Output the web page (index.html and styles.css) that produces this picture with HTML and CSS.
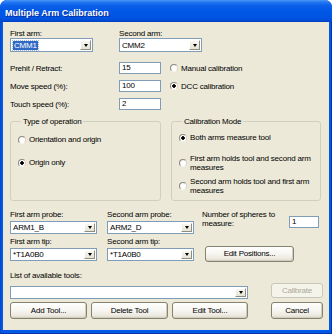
FILE: index.html
```html
<!DOCTYPE html>
<html>
<head>
<meta charset="utf-8">
<link rel="stylesheet" href="styles.css">
</head>
<body>
<div class="window">
  <div class="titlebar"><span class="title">Multiple Arm Calibration</span></div>
  <div class="frame">
    <div class="dialog">
      <div class="arms">
        <div class="field first">
          <span class="lbl">First arm:</span>
          <div class="combo w83"><span class="val"><span class="sel">CMM1</span></span><span class="drop"></span></div>
        </div>
        <div class="field">
          <span class="lbl">Second arm:</span>
          <div class="combo w83"><span class="val">CMM2</span><span class="drop"></span></div>
        </div>
      </div>

      <div class="settings">
        <span class="lbl">Prehit / Retract:</span>
        <div class="input">15</div>
        <div class="radio-cell"><span class="radio"><span class="dot"></span><span>Manual calibration</span></span></div>
        <span class="lbl">Move speed (%):</span>
        <div class="input">100</div>
        <div class="radio-cell"><span class="radio"><span class="dot on"></span><span>DCC calibration</span></span></div>
        <span class="lbl">Touch speed (%):</span>
        <div class="input">2</div>
        <div></div>
      </div>

      <div class="groups">
        <fieldset class="grp left">
          <legend>Type of operation</legend>
          <span class="radio"><span class="dot"></span><span>Orientation and origin</span></span>
          <span class="radio"><span class="dot on"></span><span>Origin only</span></span>
        </fieldset>
        <fieldset class="grp right">
          <legend>Calibration Mode</legend>
          <span class="radio r1"><span class="dot on"></span><span>Both arms measure tool</span></span>
          <span class="radio r2"><span class="dot"></span><span>First arm holds tool and second arm<br>measures</span></span>
          <span class="radio r3"><span class="dot"></span><span>Second arm holds tool and first arm<br>measures</span></span>
        </fieldset>
      </div>

      <div class="probes">
        <div class="cell">
          <span class="lbl">First arm probe:</span>
          <div class="combo w87"><span class="val">ARM1_B</span><span class="drop"></span></div>
        </div>
        <div class="cell">
          <span class="lbl">Second arm probe:</span>
          <div class="combo w87"><span class="val">ARM2_D</span><span class="drop"></span></div>
        </div>
        <div class="spheres">
          <span class="sph-text">Number of spheres to<br>measure:</span>
          <div class="input sph">1</div>
        </div>
        <div class="cell">
          <span class="lbl">First arm tip:</span>
          <div class="combo w87"><span class="val">*T1A0B0</span><span class="drop"></span></div>
        </div>
        <div class="cell">
          <span class="lbl">Second arm tip:</span>
          <div class="combo w87"><span class="val">*T1A0B0</span><span class="drop"></span></div>
        </div>
        <div class="cell">
          <div class="btn editpos">Edit Positions...</div>
        </div>
      </div>

      <div class="tools">
        <div class="cell">
          <span class="lbl">List of available tools:</span>
          <div class="combo tools-combo"><span class="val"></span><span class="drop"></span></div>
        </div>
        <div></div>
        <div class="btn calib disabled">Calibrate</div>
        <div class="btnrow">
          <div class="btn wide">Add Tool...</div>
          <div class="btn wide">Delete Tool</div>
          <div class="btn wide2">Edit Tool...</div>
        </div>
        <div></div>
        <div class="btn cancel">Cancel</div>
      </div>
    </div>
  </div>
</div>
</body>
</html>
```

FILE: styles.css
```css
* { box-sizing: border-box; }
html, body { margin: 0; padding: 0; }
body {
  width: 332px;
  height: 334px;
  overflow: hidden;
  background: #ffffff;
  font-family: "Liberation Sans", Arial, sans-serif;
  font-size: 8px;
  letter-spacing: -0.2px;
  color: #000;
}

.window {
  width: 332px;
  height: 334px;
  display: flex;
  flex-direction: column;
  border-radius: 7px 7px 0 0;
  overflow: hidden;
  background: #0055e5;
}

.titlebar {
  height: 22px;
  flex: none;
  display: flex;
  align-items: center;
  padding: 4px 0 0 5px;
  background: linear-gradient(#4a97f7 0%, #2377f2 10%, #0c60e8 25%, #0058e6 50%, #0054e3 80%, #004cd6 92%, #003fc0 100%);
}
.title {
  color: #fff;
  font-weight: bold;
  font-size: 9px;
  letter-spacing: 0;
  text-shadow: 1px 1px 0 #0a2a9a;
}

.frame {
  flex: 1;
  padding: 0 3px 4px 3px;
  background: linear-gradient(90deg, #0842c8 0, #0058e6 1px, #0058e6 331px);
  box-shadow: inset -1px 0 0 #0733a8, inset 0 -1px 0 #0733a8, inset 1px 0 0 #0a46c8;
}

.dialog {
  height: 100%;
  background: #ece9d8;
  padding: 7px 6px 0 7px;
}

.lbl {
  display: block;
  height: 9px;
  line-height: 9px;
  white-space: nowrap;
}

/* combos */
.combo {
  display: flex;
  align-items: stretch;
  height: 13px;
  background: #fff;
  border: 1px solid #7f9db9;
}
.combo .val {
  flex: 1;
  display: flex;
  align-items: center;
  padding-left: 2px;
  line-height: 9px;
  white-space: nowrap;
  overflow: hidden;
}
.combo .drop {
  flex: none;
  width: 11px;
  margin: 1px;
  display: flex;
  align-items: center;
  justify-content: center;
  background: linear-gradient(#f7f6f1, #e6e3d6);
  border: 1px solid;
  border-color: #ffffff #8f8d80 #8f8d80 #ffffff;
}
.combo .drop::after {
  content: "";
  width: 0;
  height: 0;
  border-left: 2.5px solid transparent;
  border-right: 2.5px solid transparent;
  border-top: 3px solid #000;
}
.w83 { width: 83px; height: 14px; }
.w87 { width: 87px; }

.sel {
  background: #316ac5;
  color: #fff;
  padding: 0 1px;
  line-height: 9px;
  outline: 1px dotted #9db6e0;
}

/* arms */
.arms { display: flex; }
.arms .first { width: 109px; }

/* settings */
.settings {
  display: grid;
  grid-template-columns: 109px 42px 1fr;
  grid-auto-rows: 12px;
  row-gap: 6px;
  margin-top: 10px;
  align-items: center;
}
.input {
  height: 12px;
  background: #fff;
  border: 1px solid #7f9db9;
  padding-left: 2px;
  line-height: 10px;
  white-space: nowrap;
}
.radio-cell { padding-left: 9px; }

.radio {
  display: flex;
  align-items: center;
  gap: 3px;
  white-space: nowrap;
  line-height: 9px;
}
.dot {
  flex: none;
  width: 8px;
  height: 8px;
  border-radius: 50%;
  border: 1px solid;
  border-color: #8d8b80 #d8d6cb #f4f3ee #8d8b80;
  background: radial-gradient(circle at 60% 60%, #ffffff 40%, #e9e7de 100%);
}
.dot.on {
  background: radial-gradient(circle, #000 0 1.5px, #ffffff 2px);
}

/* groups */
.groups {
  display: flex;
  gap: 10px;
  margin-top: 7px;
}
.grp {
  margin: 0;
  min-width: 0;
  height: 84px;
  border: 1px solid #d0d0bf;
  border-radius: 3px;
  display: flex;
  flex-direction: column;
  align-items: flex-start;
}
.grp legend {
  padding: 0 2px;
  margin-left: 3px;
  line-height: 9px;
  height: 9px;
}
.grp.left {
  width: 151px;
  padding: 9px 0 0 7px;
  gap: 14px;
}
.grp.right {
  width: 150px;
  padding: 7px 0 0 7px;
}
.grp.right .r2 { margin-top: 12px; }
.grp.right .r3 { margin-top: 5px; }

/* probes */
.probes {
  display: grid;
  grid-template-columns: 97px 95px 1fr;
  grid-template-rows: 23px 24px;
  row-gap: 4px;
  margin-top: 9px;
}
.cell .combo { margin-top: 1.5px; }
.spheres {
  display: flex;
  align-items: flex-start;
}
.sph-text {
  width: 87px;
  line-height: 9px;
  white-space: nowrap;
}
.input.sph {
  width: 30px;
  margin-top: 5.5px;
}
.editpos {
  margin: 8.5px 0 0 3px;
  width: 89px;
  height: 16px;
}

/* buttons */
.btn {
  display: flex;
  align-items: center;
  justify-content: center;
  white-space: nowrap;
  border: 1px solid #85836f;
  border-radius: 3px;
  background: linear-gradient(#ffffff 0%, #f6f5f0 50%, #ebe8de 85%, #d8d3c4 100%);
  box-shadow: inset -1px -1px 0 #d3cfbf;
}
.btn.disabled {
  color: #aca899;
  border-color: #c9c7ba;
  background: #f5f4ea;
  box-shadow: none;
}

/* tools */
.tools {
  display: grid;
  grid-template-columns: 238px 23px 52px;
  margin-top: 10px;
}
.tools-combo {
  margin-top: 6px !important;
  width: 238px;
}
.calib {
  height: 15px;
  margin-top: 11.5px;
}
.btnrow {
  display: flex;
  gap: 4px;
  margin-top: 3px;
}
.btn.wide { width: 77px; height: 17px; }
.btn.wide2 { width: 76px; height: 17px; }
.cancel { height: 17px; margin-top: 3px; }
```
